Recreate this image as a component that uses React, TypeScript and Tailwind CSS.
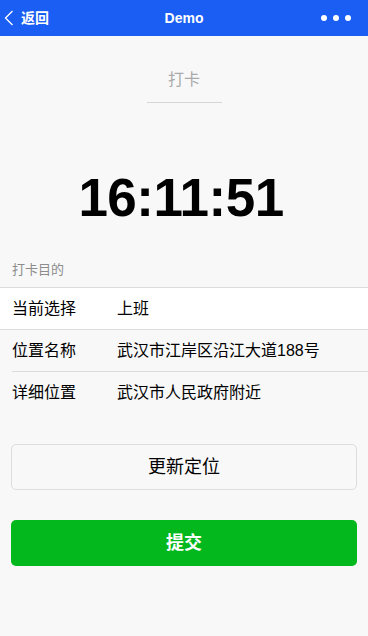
import React, { useState } from 'react';

const font = { fontFamily: '"Liberation Sans", "Noto Sans CJK SC", sans-serif' };

const rows = [
  { label: '当前选择', value: '上班' },
  { label: '位置名称', value: '武汉市江岸区沿江大道188号' },
  { label: '详细位置', value: '武汉市人民政府附近' },
];

const App: React.FC = () => {
  const [time] = useState('16:11:51');

  return (
    <div className="w-[368px] h-[636px] bg-[#f8f8f8] text-black overflow-hidden" style={font}>
      {/* header */}
      <div className="relative h-[36px] bg-[#1b5ef3] flex items-center justify-center text-white">
        <div className="absolute left-[4px] top-0 h-full flex items-center">
          <svg width="10" height="16" viewBox="0 0 10 16" fill="none">
            <path d="M8.5 1 L1.5 8 L8.5 15" stroke="white" strokeWidth="1.3" />
          </svg>
          <span className="ml-[7px] text-[14px] font-bold">返回</span>
        </div>
        <span className="text-[14px] font-bold">Demo</span>
        <div className="absolute right-[17px] top-0 h-full flex items-center gap-[6px]">
          <span className="w-[6px] h-[6px] rounded-full bg-white" />
          <span className="w-[6px] h-[6px] rounded-full bg-white" />
          <span className="w-[6px] h-[6px] rounded-full bg-white" />
        </div>
      </div>

      {/* title */}
      <div className="flex justify-center mt-[33px]">
        <div className="w-[75px] text-center text-[16px] leading-[22px] text-[#aaaaaa] pb-[11px] border-b border-[#d6d6d6]">
          打卡
        </div>
      </div>

      {/* clock */}
      <div className="mt-[67px] pr-[6px] text-center text-[53px] leading-[55px] font-bold tracking-[-0.5px]">{time}</div>

      {/* form */}
      <div className="mt-[36px] px-[12px] pb-[8px] text-[13px] leading-[18px] text-[#8c8c8c]">打卡目的</div>
      <div className="border-t border-[#dcdcdc]">
        {rows.map((r, i) => (
          <div
            key={r.label}
            className={
              i === 0
                ? 'h-[42px] flex items-center bg-white border-b border-[#dcdcdc] px-[12px] text-[16px]'
                : 'h-[42px] flex items-center text-[16px]'
            }
          >
            {i === 0 ? (
              <>
                <span className="w-[105px]">{r.label}</span>
                <span>{r.value}</span>
              </>
            ) : (
              <div className={i === 1 ? 'ml-[12px] h-full flex-1 flex items-center border-b border-[#dcdcdc]' : 'ml-[12px] h-full flex-1 flex items-center'}>
                <span className="w-[105px]">{r.label}</span>
                <span>{r.value}</span>
              </div>
            )}
          </div>
        ))}
      </div>

      {/* buttons */}
      <div className="px-[11px] mt-[30px] flex flex-col gap-[30px]">
        <button className="h-[46px] w-full rounded-[5px] border border-[#dddddd] bg-[#f8f8f8] text-[18px]">
          更新定位
        </button>
        <button className="h-[46px] w-full rounded-[5px] bg-[#03b81d] text-white text-[18px] font-bold">
          提交
        </button>
      </div>
    </div>
  );
};

export default App;
